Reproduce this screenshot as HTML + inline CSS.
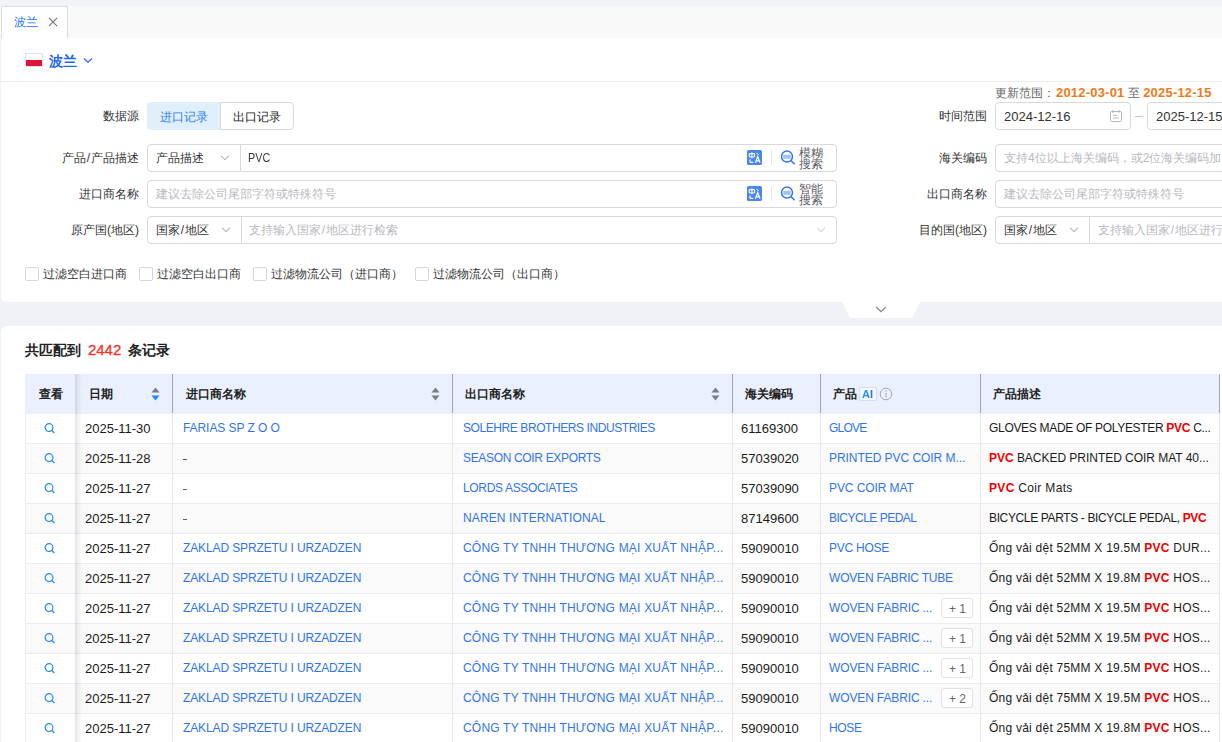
<!DOCTYPE html>
<html><head><meta charset="utf-8">
<style>
*{box-sizing:border-box;margin:0;padding:0}
html,body{width:1222px;height:742px;overflow:hidden}
body{background:#f1f2f7;font-family:"Liberation Sans",sans-serif;position:relative}
.b{position:absolute}
.t{position:absolute;white-space:nowrap}
.r{color:#f00000;font-weight:700}
</style></head><body>
<div class="b" style="left:0px;top:0px;width:1222px;height:6px;background:#f2f3f8"></div>
<div class="b" style="left:0px;top:6px;width:1222px;height:32px;background:#f9f9f9"></div>
<div class="b" style="left:1px;top:6px;width:67px;height:33px;background:#fff;border:1px solid #dcdcdc;border-bottom:none"></div>
<div class="t " style="left:13.7px;top:13.85px;font-size:12px;color:#1677ff;line-height:16px;">波兰</div>
<svg class="b" style="left:48px;top:17px" width="10" height="10" viewBox="0 0 10 10"><path d="M0.9 0.9L9.1 9.1M9.1 0.9L0.9 9.1" stroke="#707070" stroke-width="1.05"/></svg>
<div class="b" style="left:1px;top:38px;width:1221px;height:264px;background:#fff;border-radius:0 0 0 6px"></div>
<div class="b" style="left:25px;top:53px;width:18px;height:14px;border:1px solid #e2e2e6;background:linear-gradient(#fff 0,#fff 48%,#dc143c 48%)"></div>
<div class="t " style="left:49px;top:53.35px;font-size:14px;font-weight:700;color:#1f66ea;line-height:16px;">波兰</div>
<svg class="b" style="left:83px;top:56.5px" width="10" height="7" viewBox="0 0 10 7"><path d="M1 1.5L5 5.2L9 1.5" fill="none" stroke="#1f66ea" stroke-width="1.1"/></svg>
<div class="b" style="left:1px;top:81px;width:1221px;height:1px;background:#ebebef"></div>
<div class="t" style="left:995px;top:84.6px;font-size:12px;line-height:16px;color:#666">更新范围：<b style="color:#f07a1a;font-size:13px;margin-left:1px;letter-spacing:0.2px">2012-03-01</b> 至 <b style="color:#f07a1a;font-size:13px;letter-spacing:0.2px">2025-12-15</b></div>
<div class="t " style="right:1083px;text-align:right;top:108.15px;font-size:12px;color:#333;line-height:16px;">数据源</div>
<div class="t " style="right:1083px;text-align:right;top:150.15px;font-size:12px;color:#333;line-height:16px;">产品<span style="margin:0 0.8px">/</span>产品描述</div>
<div class="t " style="right:1083px;text-align:right;top:186.15px;font-size:12px;color:#333;line-height:16px;">进口商名称</div>
<div class="t " style="right:1083px;text-align:right;top:222.15px;font-size:12px;color:#333;line-height:16px;">原产国(地区)</div>
<div class="t " style="right:235px;text-align:right;top:108.15px;font-size:12px;color:#333;line-height:16px;">时间范围</div>
<div class="t " style="right:235px;text-align:right;top:150.15px;font-size:12px;color:#333;line-height:16px;">海关编码</div>
<div class="t " style="right:235px;text-align:right;top:186.15px;font-size:12px;color:#333;line-height:16px;">出口商名称</div>
<div class="t " style="right:235px;text-align:right;top:222.15px;font-size:12px;color:#333;line-height:16px;">目的国(地区)</div>
<div class="b" style="left:147px;top:102px;width:147px;height:28px;border:1px solid #d9d9dc;border-radius:4px;background:#fff"></div>
<div class="b" style="left:147px;top:102px;width:74px;height:28px;background:#e1effb;border-radius:4px 0 0 4px"></div>
<div class="b" style="left:220px;top:102px;width:1px;height:28px;background:#d9d9dc"></div>
<div class="t " style="left:160px;top:108.65px;font-size:12px;color:#2a7ef0;line-height:16px;">进口记录</div>
<div class="t " style="left:233px;top:108.65px;font-size:12px;color:#222;line-height:16px;">出口记录</div>
<div class="b" style="left:995px;top:102px;width:136px;height:28px;border:1px solid #d9d9dc;border-radius:4px"></div>
<div class="t " style="left:1004px;top:108.95px;font-size:13px;color:#333;line-height:16px;">2024-12-16</div>
<svg class="b" style="left:1110px;top:110px" width="12" height="12" viewBox="0 0 12 12"><rect x="0.5" y="1.5" width="11" height="10" rx="1" fill="none" stroke="#b5b5b5"/><path d="M3 0v3M9 0v3M3 5.5h4M3 8h6" stroke="#b5b5b5" stroke-width="1"/></svg>
<div class="b" style="left:1135px;top:116px;width:8px;height:1px;background:#c8c8cc"></div>
<div class="b" style="left:1147px;top:102px;width:120px;height:28px;border:1px solid #d9d9dc;border-radius:4px"></div>
<div class="t " style="left:1156px;top:108.95px;font-size:13px;color:#333;line-height:16px;">2025-12-15</div>
<div class="b" style="left:147px;top:144px;width:690px;height:28px;border:1px solid #d9d9dc;border-radius:4px"></div>
<div class="b" style="left:240px;top:144px;width:1px;height:28px;background:#d9d9dc"></div>
<div class="t " style="left:156px;top:150.15px;font-size:12px;color:#333;line-height:16px;">产品描述</div>
<svg class="b" style="left:220px;top:155px" width="10" height="6" viewBox="0 0 10 6"><path d="M1 0.8L5 4.6L9 0.8" fill="none" stroke="#9a9aa0" stroke-width="1"/></svg>
<div class="t " style="left:248px;top:150.45px;font-size:12px;color:#3a3a3a;line-height:16px;transform:scaleX(0.9);transform-origin:0 0;">PVC</div>
<svg class="b" style="left:747px;top:150px" width="15" height="15" viewBox="0 0 15 15"><rect width="15" height="15" rx="1.6" fill="#4a86f0"/><rect x="2.2" y="3.6" width="5.4" height="3.4" rx="0.9" fill="none" stroke="#fff" stroke-width="1.1"/><path d="M4.9 2.4v5.8" stroke="#fff" stroke-width="1.1"/><path d="M3 9.6v1.8q0 1 1 1h2.2" fill="none" stroke="#fff" stroke-width="1.2"/><path d="M8.4 12.8L10.7 6.6L13 12.8M9.3 10.9h2.8" fill="none" stroke="#fff" stroke-width="1.2"/><path d="M9.4 3.2L10.6 3.6L11.8 5" fill="none" stroke="#fff" stroke-width="1"/></svg>
<div class="b" style="left:771px;top:150px;width:1px;height:15px;background:#e6e6ea"></div>
<svg class="b" style="left:780px;top:150.2px" width="16" height="16" viewBox="0 0 16 16"><circle cx="7" cy="6.6" r="5.5" fill="none" stroke="#2f78ef" stroke-width="1.5"/><path d="M3.2 4.8h7.6v3.4l-1 0.5h-6.6z" fill="#9fc2f8"/><path d="M10.9 10.5L14.6 14.2" stroke="#2f78ef" stroke-width="1.6"/></svg>
<div class="t" style="left:799px;top:147.5px;font-size:12px;line-height:11px;color:#5c5c66;width:26px;white-space:normal;word-break:break-all">模糊搜索</div>
<div class="b" style="left:995px;top:144px;width:240px;height:28px;border:1px solid #d9d9dc;border-radius:4px"></div>
<div class="t " style="left:1004px;top:150.15px;font-size:12px;color:#b8b8be;line-height:16px;">支持4位以上海关编码，或2位海关编码加</div>
<div class="b" style="left:147px;top:180px;width:690px;height:28px;border:1px solid #d9d9dc;border-radius:4px"></div>
<div class="t " style="left:156px;top:186.15px;font-size:12px;color:#b8b8be;line-height:16px;">建议去除公司尾部字符或特殊符号</div>
<svg class="b" style="left:747px;top:186px" width="15" height="15" viewBox="0 0 15 15"><rect width="15" height="15" rx="1.6" fill="#4a86f0"/><rect x="2.2" y="3.6" width="5.4" height="3.4" rx="0.9" fill="none" stroke="#fff" stroke-width="1.1"/><path d="M4.9 2.4v5.8" stroke="#fff" stroke-width="1.1"/><path d="M3 9.6v1.8q0 1 1 1h2.2" fill="none" stroke="#fff" stroke-width="1.2"/><path d="M8.4 12.8L10.7 6.6L13 12.8M9.3 10.9h2.8" fill="none" stroke="#fff" stroke-width="1.2"/><path d="M9.4 3.2L10.6 3.6L11.8 5" fill="none" stroke="#fff" stroke-width="1"/></svg>
<div class="b" style="left:771px;top:186px;width:1px;height:15px;background:#e6e6ea"></div>
<svg class="b" style="left:780px;top:186.2px" width="16" height="16" viewBox="0 0 16 16"><circle cx="7" cy="6.6" r="5.5" fill="none" stroke="#2f78ef" stroke-width="1.5"/><path d="M3.2 4.8h7.6v3.4l-1 0.5h-6.6z" fill="#9fc2f8"/><path d="M10.9 10.5L14.6 14.2" stroke="#2f78ef" stroke-width="1.6"/></svg>
<div class="t" style="left:799px;top:183.5px;font-size:12px;line-height:11px;color:#5c5c66;width:26px;white-space:normal;word-break:break-all">智能搜索</div>
<div class="b" style="left:995px;top:180px;width:240px;height:28px;border:1px solid #d9d9dc;border-radius:4px"></div>
<div class="t " style="left:1004px;top:186.15px;font-size:12px;color:#b8b8be;line-height:16px;">建议去除公司尾部字符或特殊符号</div>
<div class="b" style="left:147px;top:216px;width:690px;height:28px;border:1px solid #d9d9dc;border-radius:4px"></div>
<div class="b" style="left:241px;top:216px;width:1px;height:28px;background:#d9d9dc"></div>
<div class="t " style="left:156px;top:222.15px;font-size:12px;color:#333;line-height:16px;">国家<span style="margin:0 0.8px">/</span>地区</div>
<svg class="b" style="left:221px;top:227px" width="10" height="6" viewBox="0 0 10 6"><path d="M1 0.8L5 4.6L9 0.8" fill="none" stroke="#9a9aa0" stroke-width="1"/></svg>
<div class="t " style="left:249px;top:222.15px;font-size:12px;color:#b8b8be;line-height:16px;">支持输入国家<span style="margin:0 0.8px">/</span>地区进行检索</div>
<svg class="b" style="left:816px;top:227px" width="10" height="6" viewBox="0 0 10 6"><path d="M1 0.8L5 4.6L9 0.8" fill="none" stroke="#c0c0c5" stroke-width="1"/></svg>
<div class="b" style="left:995px;top:216px;width:240px;height:28px;border:1px solid #d9d9dc;border-radius:4px"></div>
<div class="b" style="left:1089px;top:216px;width:1px;height:28px;background:#d9d9dc"></div>
<div class="t " style="left:1004px;top:222.15px;font-size:12px;color:#333;line-height:16px;">国家<span style="margin:0 0.8px">/</span>地区</div>
<svg class="b" style="left:1069px;top:227px" width="10" height="6" viewBox="0 0 10 6"><path d="M1 0.8L5 4.6L9 0.8" fill="none" stroke="#9a9aa0" stroke-width="1"/></svg>
<div class="t " style="left:1098px;top:222.15px;font-size:12px;color:#b8b8be;line-height:16px;">支持输入国家<span style="margin:0 0.8px">/</span>地区进行检索</div>
<div class="b" style="left:25px;top:267px;width:14px;height:14px;border:1px solid #d6d6dc;border-radius:2px;background:#fff"></div>
<div class="t " style="left:43px;top:266.15px;font-size:12px;color:#333;line-height:16px;">过滤空白进口商</div>
<div class="b" style="left:139px;top:267px;width:14px;height:14px;border:1px solid #d6d6dc;border-radius:2px;background:#fff"></div>
<div class="t " style="left:157px;top:266.15px;font-size:12px;color:#333;line-height:16px;">过滤空白出口商</div>
<div class="b" style="left:253px;top:267px;width:14px;height:14px;border:1px solid #d6d6dc;border-radius:2px;background:#fff"></div>
<div class="t " style="left:271px;top:266.15px;font-size:12px;color:#333;line-height:16px;">过滤物流公司（进口商）</div>
<div class="b" style="left:415px;top:267px;width:14px;height:14px;border:1px solid #d6d6dc;border-radius:2px;background:#fff"></div>
<div class="t " style="left:433px;top:266.15px;font-size:12px;color:#333;line-height:16px;">过滤物流公司（出口商）</div>
<svg class="b" style="left:842px;top:302px" width="78" height="17" viewBox="0 0 78 17"><path d="M0 0H78L70 16H8Z" fill="#fff"/></svg>
<svg class="b" style="left:875px;top:306px" width="12" height="7" viewBox="0 0 12 7"><path d="M1 1L6 5.6L11 1" fill="none" stroke="#8e8ea0" stroke-width="1.3"/></svg>
<div class="b" style="left:1px;top:326px;width:1221px;height:420px;background:#fff;border-radius:6px 0 0 0"></div>
<div class="t" style="left:25px;top:342.2px;font-size:14px;line-height:16px;font-weight:700;color:#222">共匹配到 <span style="color:#f0362a;font-size:15px;font-weight:400;-webkit-text-stroke:0.35px #f0362a;margin:0 3px">2442</span> 条记录</div>
<div class="b" style="left:25px;top:374px;width:1195px;height:39px;background:#eaf0fd"></div>
<div class="b" style="left:25px;top:413px;width:1195px;height:30px;background:#fff"></div>
<div class="b" style="left:25px;top:443px;width:1195px;height:30px;background:#fafafa"></div>
<div class="b" style="left:25px;top:473px;width:1195px;height:30px;background:#fff"></div>
<div class="b" style="left:25px;top:503px;width:1195px;height:30px;background:#fafafa"></div>
<div class="b" style="left:25px;top:533px;width:1195px;height:30px;background:#fff"></div>
<div class="b" style="left:25px;top:563px;width:1195px;height:30px;background:#fafafa"></div>
<div class="b" style="left:25px;top:593px;width:1195px;height:30px;background:#fff"></div>
<div class="b" style="left:25px;top:623px;width:1195px;height:30px;background:#fafafa"></div>
<div class="b" style="left:25px;top:653px;width:1195px;height:30px;background:#fff"></div>
<div class="b" style="left:25px;top:683px;width:1195px;height:30px;background:#fafafa"></div>
<div class="b" style="left:25px;top:713px;width:1195px;height:30px;background:#fff"></div>
<div class="b" style="left:25px;top:443px;width:1195px;height:1px;background:#ebebee"></div>
<div class="b" style="left:25px;top:473px;width:1195px;height:1px;background:#ebebee"></div>
<div class="b" style="left:25px;top:503px;width:1195px;height:1px;background:#ebebee"></div>
<div class="b" style="left:25px;top:533px;width:1195px;height:1px;background:#ebebee"></div>
<div class="b" style="left:25px;top:563px;width:1195px;height:1px;background:#ebebee"></div>
<div class="b" style="left:25px;top:593px;width:1195px;height:1px;background:#ebebee"></div>
<div class="b" style="left:25px;top:623px;width:1195px;height:1px;background:#ebebee"></div>
<div class="b" style="left:25px;top:653px;width:1195px;height:1px;background:#ebebee"></div>
<div class="b" style="left:25px;top:683px;width:1195px;height:1px;background:#ebebee"></div>
<div class="b" style="left:25px;top:713px;width:1195px;height:1px;background:#ebebee"></div>
<div class="b" style="left:25px;top:743px;width:1195px;height:1px;background:#ebebee"></div>
<div class="b" style="left:25px;top:413px;width:1195px;height:1px;background:#f0f0f3"></div>
<div class="b" style="left:172px;top:374px;width:1px;height:39px;background:#a3a4ae"></div>
<div class="b" style="left:172px;top:413px;width:1px;height:330px;background:#e8e8eb"></div>
<div class="b" style="left:452px;top:374px;width:1px;height:39px;background:#a3a4ae"></div>
<div class="b" style="left:452px;top:413px;width:1px;height:330px;background:#e8e8eb"></div>
<div class="b" style="left:732px;top:374px;width:1px;height:39px;background:#a3a4ae"></div>
<div class="b" style="left:732px;top:413px;width:1px;height:330px;background:#e8e8eb"></div>
<div class="b" style="left:820px;top:374px;width:1px;height:39px;background:#a3a4ae"></div>
<div class="b" style="left:820px;top:413px;width:1px;height:330px;background:#e8e8eb"></div>
<div class="b" style="left:980px;top:374px;width:1px;height:39px;background:#a3a4ae"></div>
<div class="b" style="left:980px;top:413px;width:1px;height:330px;background:#e8e8eb"></div>
<div class="b" style="left:1219px;top:374px;width:1px;height:39px;background:#a3a4ae"></div>
<div class="b" style="left:1219px;top:413px;width:1px;height:330px;background:#e8e8eb"></div>
<div class="b" style="left:25px;top:413px;width:1px;height:330px;background:#ececef"></div>
<div class="b" style="left:75px;top:374px;width:7px;height:369px;background:linear-gradient(90deg,rgba(40,50,90,0.13),rgba(40,50,90,0.03) 70%,rgba(40,50,90,0))"></div>
<div class="t " style="left:39px;top:386.15px;font-size:12px;font-weight:700;color:#222;line-height:16px;">查看</div>
<div class="t " style="left:89px;top:386.15px;font-size:12px;font-weight:700;color:#222;line-height:16px;">日期</div>
<div class="t " style="left:185.5px;top:386.15px;font-size:12px;font-weight:700;color:#222;line-height:16px;">进口商名称</div>
<div class="t " style="left:465px;top:386.15px;font-size:12px;font-weight:700;color:#222;line-height:16px;">出口商名称</div>
<div class="t " style="left:745px;top:386.15px;font-size:12px;font-weight:700;color:#222;line-height:16px;">海关编码</div>
<div class="t " style="left:833px;top:386.15px;font-size:12px;font-weight:700;color:#222;line-height:16px;">产品</div>
<div class="t " style="left:993px;top:386.15px;font-size:12px;font-weight:700;color:#222;line-height:16px;">产品描述</div>
<svg class="b" style="left:151px;top:387px" width="9" height="14" viewBox="0 0 9 14"><path d="M4.5 0.5L8.5 5.5H0.5Z" fill="#7b7b85"/><path d="M4.5 13.5L8.5 8.5H0.5Z" fill="#1e88f5"/></svg>
<svg class="b" style="left:431px;top:387px" width="9" height="14" viewBox="0 0 9 14"><path d="M4.5 0.5L8.5 5.5H0.5Z" fill="#7b7b85"/><path d="M4.5 13.5L8.5 8.5H0.5Z" fill="#7b7b85"/></svg>
<svg class="b" style="left:711px;top:387px" width="9" height="14" viewBox="0 0 9 14"><path d="M4.5 0.5L8.5 5.5H0.5Z" fill="#7b7b85"/><path d="M4.5 13.5L8.5 8.5H0.5Z" fill="#7b7b85"/></svg>
<div class="b" style="left:859px;top:387px;width:18px;height:14px;border:1px solid #d3dcfb;border-radius:2px;background:#f5f8ff"></div>
<div class="t" style="left:862px;top:386px;font-size:11px;line-height:16px;font-weight:700;color:#1a8cf0;background:linear-gradient(100deg,#12b5f0,#2a5ff0);-webkit-background-clip:text;background-clip:text;-webkit-text-fill-color:transparent">AI</div>
<svg class="b" style="left:879px;top:387px" width="14" height="14" viewBox="0 0 14 14"><circle cx="7" cy="7" r="5.8" fill="none" stroke="#a9a9b2" stroke-width="1"/><path d="M7 6v4.2M7 3.6v1.2" stroke="#a9a9b2" stroke-width="1.1"/></svg>
<svg class="b" style="left:44px;top:423px" width="12" height="11" viewBox="0 0 12 11"><circle cx="5" cy="4.6" r="3.9" fill="none" stroke="#1e88f5" stroke-width="1.2"/><path d="M7.8 7.4L10.4 10" stroke="#1e88f5" stroke-width="1.3"/></svg>
<div class="t " style="left:85px;top:420.75px;font-size:13px;color:#1a1a1a;line-height:16px;">2025-11-30</div>
<div class="t " style="left:183px;top:420.15px;font-size:12px;color:#3074ef;line-height:16px;letter-spacing:-0.071px;">FARIAS SP Z O O</div>
<div class="t " style="left:463px;top:420.15px;font-size:12px;color:#3074ef;line-height:16px;letter-spacing:-0.423px;">SOLEHRE BROTHERS INDUSTRIES</div>
<div class="t " style="left:741px;top:420.75px;font-size:13px;color:#1a1a1a;line-height:16px;">61169300</div>
<div class="t " style="left:829px;top:420.15px;font-size:12px;color:#3074ef;line-height:16px;letter-spacing:-0.75px;">GLOVE</div>
<div class="t " style="left:989px;top:420.15px;font-size:12px;color:#1a1a1a;line-height:16px;letter-spacing:-0.312px;">GLOVES MADE OF POLYESTER <b class="r">PVC</b> C...</div>
<svg class="b" style="left:44px;top:453px" width="12" height="11" viewBox="0 0 12 11"><circle cx="5" cy="4.6" r="3.9" fill="none" stroke="#1e88f5" stroke-width="1.2"/><path d="M7.8 7.4L10.4 10" stroke="#1e88f5" stroke-width="1.3"/></svg>
<div class="t " style="left:85px;top:450.75px;font-size:13px;color:#1a1a1a;line-height:16px;">2025-11-28</div>
<div class="b" style="left:183px;top:459px;width:4px;height:1px;background:#5a5c78"></div>
<div class="t " style="left:463px;top:450.15px;font-size:12px;color:#3074ef;line-height:16px;letter-spacing:-0.333px;">SEASON COIR EXPORTS</div>
<div class="t " style="left:741px;top:450.75px;font-size:13px;color:#1a1a1a;line-height:16px;">57039020</div>
<div class="t " style="left:829px;top:450.15px;font-size:12px;color:#3074ef;line-height:16px;letter-spacing:-0.05px;">PRINTED PVC COIR M...</div>
<div class="t " style="left:989px;top:450.15px;font-size:12px;color:#1a1a1a;line-height:16px;letter-spacing:-0.031px;"><b class="r">PVC</b> BACKED PRINTED COIR MAT 40...</div>
<svg class="b" style="left:44px;top:483px" width="12" height="11" viewBox="0 0 12 11"><circle cx="5" cy="4.6" r="3.9" fill="none" stroke="#1e88f5" stroke-width="1.2"/><path d="M7.8 7.4L10.4 10" stroke="#1e88f5" stroke-width="1.3"/></svg>
<div class="t " style="left:85px;top:480.75px;font-size:13px;color:#1a1a1a;line-height:16px;">2025-11-27</div>
<div class="b" style="left:183px;top:489px;width:4px;height:1px;background:#5a5c78"></div>
<div class="t " style="left:463px;top:480.15px;font-size:12px;color:#3074ef;line-height:16px;letter-spacing:-0.333px;">LORDS ASSOCIATES</div>
<div class="t " style="left:741px;top:480.75px;font-size:13px;color:#1a1a1a;line-height:16px;">57039090</div>
<div class="t " style="left:829px;top:480.15px;font-size:12px;color:#3074ef;line-height:16px;letter-spacing:-0.091px;">PVC COIR MAT</div>
<div class="t " style="left:989px;top:480.15px;font-size:12px;color:#1a1a1a;line-height:16px;letter-spacing:0.333px;"><b class="r">PVC</b> Coir Mats</div>
<svg class="b" style="left:44px;top:513px" width="12" height="11" viewBox="0 0 12 11"><circle cx="5" cy="4.6" r="3.9" fill="none" stroke="#1e88f5" stroke-width="1.2"/><path d="M7.8 7.4L10.4 10" stroke="#1e88f5" stroke-width="1.3"/></svg>
<div class="t " style="left:85px;top:510.75px;font-size:13px;color:#1a1a1a;line-height:16px;">2025-11-27</div>
<div class="b" style="left:183px;top:519px;width:4px;height:1px;background:#5a5c78"></div>
<div class="t " style="left:463px;top:510.15px;font-size:12px;color:#3074ef;line-height:16px;letter-spacing:0.111px;">NAREN INTERNATIONAL</div>
<div class="t " style="left:741px;top:510.75px;font-size:13px;color:#1a1a1a;line-height:16px;">87149600</div>
<div class="t " style="left:829px;top:510.15px;font-size:12px;color:#3074ef;line-height:16px;letter-spacing:-0.5px;">BICYCLE PEDAL</div>
<div class="t " style="left:989px;top:510.15px;font-size:12px;color:#1a1a1a;line-height:16px;letter-spacing:-0.364px;">BICYCLE PARTS - BICYCLE PEDAL, <b class="r">PVC</b></div>
<svg class="b" style="left:44px;top:543px" width="12" height="11" viewBox="0 0 12 11"><circle cx="5" cy="4.6" r="3.9" fill="none" stroke="#1e88f5" stroke-width="1.2"/><path d="M7.8 7.4L10.4 10" stroke="#1e88f5" stroke-width="1.3"/></svg>
<div class="t " style="left:85px;top:540.75px;font-size:13px;color:#1a1a1a;line-height:16px;">2025-11-27</div>
<div class="t " style="left:183px;top:540.15px;font-size:12px;color:#3074ef;line-height:16px;letter-spacing:-0.125px;">ZAKLAD SPRZETU I URZADZEN</div>
<div class="t " style="left:463px;top:540.15px;font-size:12px;color:#3074ef;line-height:16px;letter-spacing:0.2px;">CÔNG TY TNHH THƯƠNG MẠI XUẤT NHẬP...</div>
<div class="t " style="left:741px;top:540.75px;font-size:13px;color:#1a1a1a;line-height:16px;">59090010</div>
<div class="t " style="left:829px;top:540.15px;font-size:12px;color:#3074ef;line-height:16px;letter-spacing:-0.257px;">PVC HOSE</div>
<div class="t " style="left:989px;top:540.15px;font-size:12px;color:#1a1a1a;line-height:16px;letter-spacing:0.235px;">Ống vải dệt 52MM X 19.5M <b class="r">PVC</b> DUR...</div>
<svg class="b" style="left:44px;top:573px" width="12" height="11" viewBox="0 0 12 11"><circle cx="5" cy="4.6" r="3.9" fill="none" stroke="#1e88f5" stroke-width="1.2"/><path d="M7.8 7.4L10.4 10" stroke="#1e88f5" stroke-width="1.3"/></svg>
<div class="t " style="left:85px;top:570.75px;font-size:13px;color:#1a1a1a;line-height:16px;">2025-11-27</div>
<div class="t " style="left:183px;top:570.15px;font-size:12px;color:#3074ef;line-height:16px;letter-spacing:-0.125px;">ZAKLAD SPRZETU I URZADZEN</div>
<div class="t " style="left:463px;top:570.15px;font-size:12px;color:#3074ef;line-height:16px;letter-spacing:0.2px;">CÔNG TY TNHH THƯƠNG MẠI XUẤT NHẬP...</div>
<div class="t " style="left:741px;top:570.75px;font-size:13px;color:#1a1a1a;line-height:16px;">59090010</div>
<div class="t " style="left:829px;top:570.15px;font-size:12px;color:#3074ef;line-height:16px;letter-spacing:-0.188px;">WOVEN FABRIC TUBE</div>
<div class="t " style="left:989px;top:570.15px;font-size:12px;color:#1a1a1a;line-height:16px;letter-spacing:0.235px;">Ống vải dệt 52MM X 19.8M <b class="r">PVC</b> HOS...</div>
<svg class="b" style="left:44px;top:603px" width="12" height="11" viewBox="0 0 12 11"><circle cx="5" cy="4.6" r="3.9" fill="none" stroke="#1e88f5" stroke-width="1.2"/><path d="M7.8 7.4L10.4 10" stroke="#1e88f5" stroke-width="1.3"/></svg>
<div class="t " style="left:85px;top:600.75px;font-size:13px;color:#1a1a1a;line-height:16px;">2025-11-27</div>
<div class="t " style="left:183px;top:600.15px;font-size:12px;color:#3074ef;line-height:16px;letter-spacing:-0.125px;">ZAKLAD SPRZETU I URZADZEN</div>
<div class="t " style="left:463px;top:600.15px;font-size:12px;color:#3074ef;line-height:16px;letter-spacing:0.2px;">CÔNG TY TNHH THƯƠNG MẠI XUẤT NHẬP...</div>
<div class="t " style="left:741px;top:600.75px;font-size:13px;color:#1a1a1a;line-height:16px;">59090010</div>
<div class="t " style="left:829px;top:600.15px;font-size:12px;color:#3074ef;line-height:16px;letter-spacing:-0.133px;">WOVEN FABRIC ...</div>
<div class="b" style="left:941px;top:598px;width:32px;height:20px;border:1px solid #e1e3e8;border-radius:3px;background:#fff"></div>
<div class="t " style="left:949px;top:601.05px;font-size:12px;color:#666;line-height:16px;">+ 1</div>
<div class="t " style="left:989px;top:600.15px;font-size:12px;color:#1a1a1a;line-height:16px;letter-spacing:0.235px;">Ống vải dệt 52MM X 19.5M <b class="r">PVC</b> HOS...</div>
<svg class="b" style="left:44px;top:633px" width="12" height="11" viewBox="0 0 12 11"><circle cx="5" cy="4.6" r="3.9" fill="none" stroke="#1e88f5" stroke-width="1.2"/><path d="M7.8 7.4L10.4 10" stroke="#1e88f5" stroke-width="1.3"/></svg>
<div class="t " style="left:85px;top:630.75px;font-size:13px;color:#1a1a1a;line-height:16px;">2025-11-27</div>
<div class="t " style="left:183px;top:630.15px;font-size:12px;color:#3074ef;line-height:16px;letter-spacing:-0.125px;">ZAKLAD SPRZETU I URZADZEN</div>
<div class="t " style="left:463px;top:630.15px;font-size:12px;color:#3074ef;line-height:16px;letter-spacing:0.2px;">CÔNG TY TNHH THƯƠNG MẠI XUẤT NHẬP...</div>
<div class="t " style="left:741px;top:630.75px;font-size:13px;color:#1a1a1a;line-height:16px;">59090010</div>
<div class="t " style="left:829px;top:630.15px;font-size:12px;color:#3074ef;line-height:16px;letter-spacing:-0.133px;">WOVEN FABRIC ...</div>
<div class="b" style="left:941px;top:628px;width:32px;height:20px;border:1px solid #e1e3e8;border-radius:3px;background:#fff"></div>
<div class="t " style="left:949px;top:631.05px;font-size:12px;color:#666;line-height:16px;">+ 1</div>
<div class="t " style="left:989px;top:630.15px;font-size:12px;color:#1a1a1a;line-height:16px;letter-spacing:0.235px;">Ống vải dệt 52MM X 19.5M <b class="r">PVC</b> HOS...</div>
<svg class="b" style="left:44px;top:663px" width="12" height="11" viewBox="0 0 12 11"><circle cx="5" cy="4.6" r="3.9" fill="none" stroke="#1e88f5" stroke-width="1.2"/><path d="M7.8 7.4L10.4 10" stroke="#1e88f5" stroke-width="1.3"/></svg>
<div class="t " style="left:85px;top:660.75px;font-size:13px;color:#1a1a1a;line-height:16px;">2025-11-27</div>
<div class="t " style="left:183px;top:660.15px;font-size:12px;color:#3074ef;line-height:16px;letter-spacing:-0.125px;">ZAKLAD SPRZETU I URZADZEN</div>
<div class="t " style="left:463px;top:660.15px;font-size:12px;color:#3074ef;line-height:16px;letter-spacing:0.2px;">CÔNG TY TNHH THƯƠNG MẠI XUẤT NHẬP...</div>
<div class="t " style="left:741px;top:660.75px;font-size:13px;color:#1a1a1a;line-height:16px;">59090010</div>
<div class="t " style="left:829px;top:660.15px;font-size:12px;color:#3074ef;line-height:16px;letter-spacing:-0.133px;">WOVEN FABRIC ...</div>
<div class="b" style="left:941px;top:658px;width:32px;height:20px;border:1px solid #e1e3e8;border-radius:3px;background:#fff"></div>
<div class="t " style="left:949px;top:661.05px;font-size:12px;color:#666;line-height:16px;">+ 1</div>
<div class="t " style="left:989px;top:660.15px;font-size:12px;color:#1a1a1a;line-height:16px;letter-spacing:0.235px;">Ống vải dệt 75MM X 19.5M <b class="r">PVC</b> HOS...</div>
<svg class="b" style="left:44px;top:693px" width="12" height="11" viewBox="0 0 12 11"><circle cx="5" cy="4.6" r="3.9" fill="none" stroke="#1e88f5" stroke-width="1.2"/><path d="M7.8 7.4L10.4 10" stroke="#1e88f5" stroke-width="1.3"/></svg>
<div class="t " style="left:85px;top:690.75px;font-size:13px;color:#1a1a1a;line-height:16px;">2025-11-27</div>
<div class="t " style="left:183px;top:690.15px;font-size:12px;color:#3074ef;line-height:16px;letter-spacing:-0.125px;">ZAKLAD SPRZETU I URZADZEN</div>
<div class="t " style="left:463px;top:690.15px;font-size:12px;color:#3074ef;line-height:16px;letter-spacing:0.2px;">CÔNG TY TNHH THƯƠNG MẠI XUẤT NHẬP...</div>
<div class="t " style="left:741px;top:690.75px;font-size:13px;color:#1a1a1a;line-height:16px;">59090010</div>
<div class="t " style="left:829px;top:690.15px;font-size:12px;color:#3074ef;line-height:16px;letter-spacing:-0.133px;">WOVEN FABRIC ...</div>
<div class="b" style="left:941px;top:688px;width:32px;height:20px;border:1px solid #e1e3e8;border-radius:3px;background:#fff"></div>
<div class="t " style="left:949px;top:691.05px;font-size:12px;color:#666;line-height:16px;">+ 2</div>
<div class="t " style="left:989px;top:690.15px;font-size:12px;color:#1a1a1a;line-height:16px;letter-spacing:0.235px;">Ống vải dệt 75MM X 19.5M <b class="r">PVC</b> HOS...</div>
<svg class="b" style="left:44px;top:723px" width="12" height="11" viewBox="0 0 12 11"><circle cx="5" cy="4.6" r="3.9" fill="none" stroke="#1e88f5" stroke-width="1.2"/><path d="M7.8 7.4L10.4 10" stroke="#1e88f5" stroke-width="1.3"/></svg>
<div class="t " style="left:85px;top:720.75px;font-size:13px;color:#1a1a1a;line-height:16px;">2025-11-27</div>
<div class="t " style="left:183px;top:720.15px;font-size:12px;color:#3074ef;line-height:16px;letter-spacing:-0.125px;">ZAKLAD SPRZETU I URZADZEN</div>
<div class="t " style="left:463px;top:720.15px;font-size:12px;color:#3074ef;line-height:16px;letter-spacing:0.2px;">CÔNG TY TNHH THƯƠNG MẠI XUẤT NHẬP...</div>
<div class="t " style="left:741px;top:720.75px;font-size:13px;color:#1a1a1a;line-height:16px;">59090010</div>
<div class="t " style="left:829px;top:720.15px;font-size:12px;color:#3074ef;line-height:16px;letter-spacing:-0.333px;">HOSE</div>
<div class="t " style="left:989px;top:720.15px;font-size:12px;color:#1a1a1a;line-height:16px;letter-spacing:0.235px;">Ống vải dệt 25MM X 19.8M <b class="r">PVC</b> HOS...</div>
</body></html>
